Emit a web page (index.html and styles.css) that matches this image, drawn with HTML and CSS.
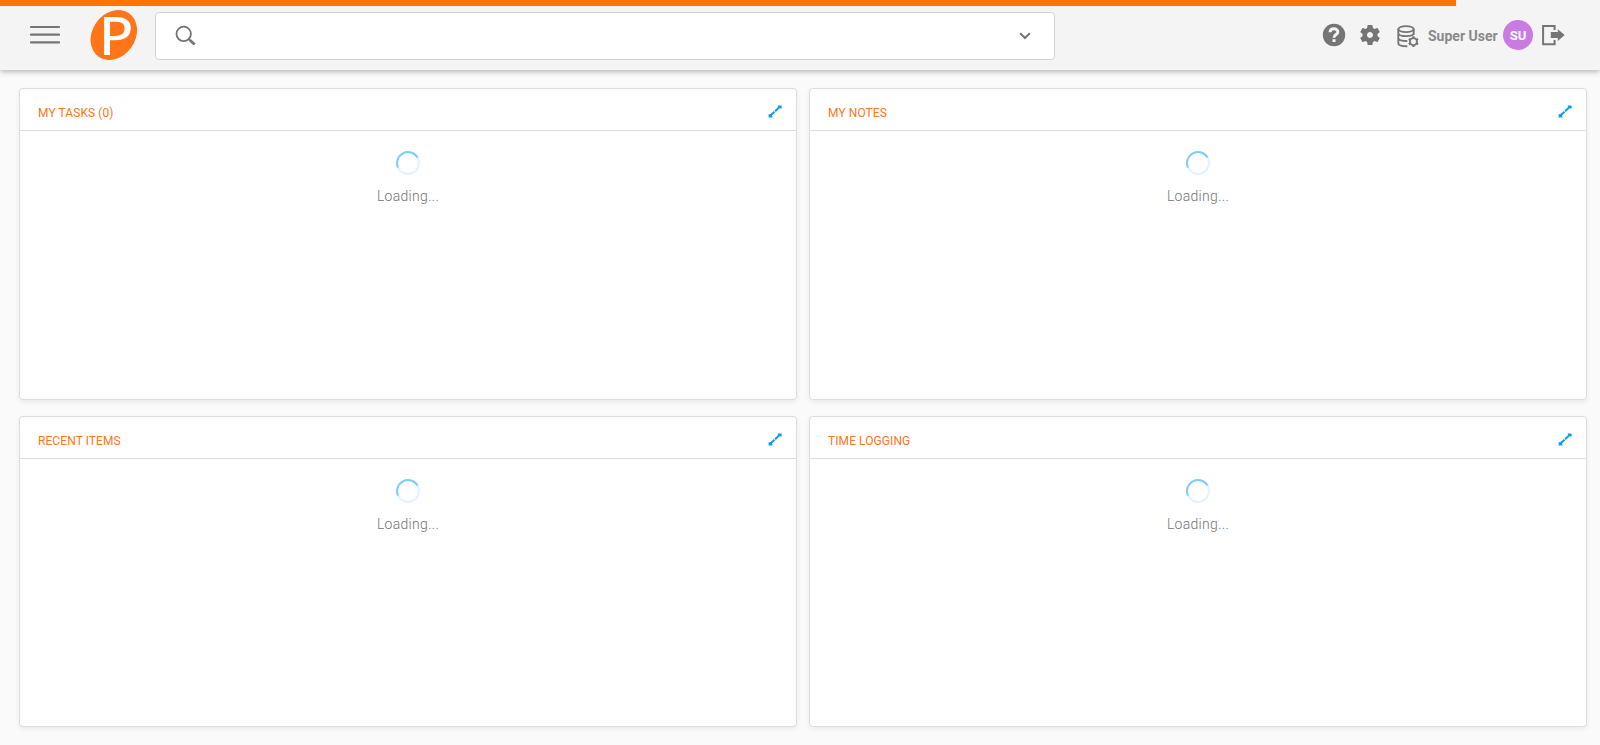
FILE: index.html
```html
<!DOCTYPE html>
<html lang="en">
<head>
<meta charset="utf-8">
<title>Dashboard</title>
<link rel="stylesheet" href="styles.css">
</head>
<body>
<header class="topbar">
  <div class="progress"></div>
  <svg class="menu" width="30" height="20" viewBox="0 0 30 20"><path d="M1 2h28M1 9.7h28M1 17.4h28" stroke="#757575" stroke-width="2.2" stroke-linecap="round"/></svg>
  <svg class="logo" width="48" height="52" viewBox="0 0 48 52"><ellipse cx="23.800" cy="26" rx="21.500" ry="26.500" transform="rotate(35 23.800 26)" fill="#ff7518"/><path fill="#fff" fill-rule="evenodd" d="M14.100 8H26C36 8 40.800 12 40.800 19C40.800 27 35 31.300 25 31.300H20V46H14.100ZM20 12.700V27H25C31.500 27 34.600 24.300 34.600 19.300C34.600 14.600 31.500 12.700 25 12.700Z"/></svg>
  <div class="search">
    <svg width="22" height="22" viewBox="0 0 22 22" fill="none" stroke="#757575"><circle cx="8.700" cy="8.900" r="7.200" stroke-width="1.800"/><path d="M13.800 14l1.500 1.500" stroke-width="1.800"/><path d="M15 15.200l4.700 4.400" stroke-width="2.800"/></svg>
    <svg class="chevron" width="12" height="8" viewBox="0 0 12 8"><path d="M1.200 1.200L6 6l4.800-4.800" fill="none" stroke="#757575" stroke-width="2"/></svg>
  </div>
  <nav class="tools">
    <svg class="help" width="24" height="24" viewBox="0 0 24 24"><circle cx="12" cy="12" r="11.200" fill="#757575"/><path d="M8 9.300C8.200 4.700 15.800 4.700 15.800 9C15.800 11.600 12 11.600 12 14.800" fill="none" stroke="#f4f4f4" stroke-width="3"/><path d="M10.500 16.200h3v2.800h-3z" fill="#f4f4f4"/></svg>
    <svg class="gear" width="24" height="24" viewBox="0 0 24 24"><path fill="#757575" d="M19.430 12.980c.04-.32.070-.64.070-.98s-.03-.66-.07-.98l2.110-1.650c.19-.15.240-.42.120-.64l-2-3.460c-.12-.22-.39-.3-.61-.22l-2.490 1c-.52-.4-1.080-.73-1.690-.98l-.38-2.650C14.460 2.180 14.250 2 14 2h-4c-.25 0-.46.180-.49.420l-.38 2.650c-.61.250-1.170.590-1.690.980l-2.490-1c-.23-.09-.49 0-.61.220l-2 3.460c-.13.220-.07.490.120.640l2.110 1.650c-.04.320-.07.650-.07.980s.03.660.070.980l-2.110 1.650c-.19.150-.24.420-.12.640l2 3.460c.12.220.390.300.610.220l2.490-1c.52.400 1.080.730 1.690.980l.38 2.650c.03.240.240.420.490.420h4c.25 0 .46-.18.490-.42l.38-2.650c.61-.25 1.170-.59 1.690-.98l2.490 1c.23.090.49 0 .61-.22l2-3.460c.12-.22.070-.49-.12-.64l-2.110-1.650zM12 15c-1.650 0-3-1.350-3-3s1.350-3 3-3 3 1.350 3 3-1.350 3-3 3z"/></svg>
    <svg class="data" width="22" height="23" viewBox="0 0 22 23" fill="none" stroke="#757575"><ellipse cx="9" cy="4.100" rx="7.700" ry="3" stroke-width="1.800"/><path d="M1.300 4v14.200c0 1.900 3.800 3 9 3.100M16.700 4v5.700M1.300 8c0 4.200 15.400 4.200 15.400 0M1.300 13c0 2.100 3.600 3 9 3" stroke-width="1.900"/><circle cx="16.400" cy="16.600" r="3.500" stroke-width="1.900"/><path d="M16.400 11.200v2M16.400 20v2M11.800 13.900l1.700 1M19.300 18.300l1.700 1M11.800 19.300l1.700-1M19.300 14.900l1.700-1" stroke-width="2.200"/></svg>
    <span class="user">Super User</span>
    <span class="avatar">SU</span>
    <svg class="exit" width="24" height="22" viewBox="0 0 24 22"><path d="M13.600 6V1.900H2.100v18.300h11.500V16" fill="none" stroke="#757575" stroke-width="2"/><path d="M9.800 8h7V5.200L23.700 11l-6.900 5.900V14h-7z" fill="#757575"/></svg>
  </nav>
</header>
<main class="grid">
  <section class="card"><div class="head"><h2>MY TASKS (0)</h2><svg class="expand" width="14" height="13" viewBox="0 0 14 13"><path d="M2.500 10.500L11.500 2" stroke="#0d9bea" stroke-width="2" stroke-dasharray="5.500 .8"/><path d="M.6 9.300h2L4.400 11v1.600H.6zM9.900.4h3.700v3.200h-2L9.900 2z" fill="#0d9bea"/></svg></div><div class="body"><svg class="spinner" width="24" height="24" viewBox="0 0 24 24"><circle cx="12" cy="12" r="11" fill="none" stroke="#e1f3fe" stroke-width="2"/><path d="M2 16.600A11 11 0 0 1 21.500 6.500" fill="none" stroke="#81cdfa" stroke-width="2"/></svg><p>Loading...</p></div></section>
  <section class="card"><div class="head"><h2>MY NOTES</h2><svg class="expand" width="14" height="13" viewBox="0 0 14 13"><path d="M2.500 10.500L11.500 2" stroke="#0d9bea" stroke-width="2" stroke-dasharray="5.500 .8"/><path d="M.6 9.300h2L4.400 11v1.600H.6zM9.900.4h3.700v3.200h-2L9.900 2z" fill="#0d9bea"/></svg></div><div class="body"><svg class="spinner" width="24" height="24" viewBox="0 0 24 24"><circle cx="12" cy="12" r="11" fill="none" stroke="#e1f3fe" stroke-width="2"/><path d="M2 16.600A11 11 0 0 1 21.500 6.500" fill="none" stroke="#81cdfa" stroke-width="2"/></svg><p>Loading...</p></div></section>
  <section class="card"><div class="head"><h2>RECENT ITEMS</h2><svg class="expand" width="14" height="13" viewBox="0 0 14 13"><path d="M2.500 10.500L11.500 2" stroke="#0d9bea" stroke-width="2" stroke-dasharray="5.500 .8"/><path d="M.6 9.300h2L4.400 11v1.600H.6zM9.900.4h3.700v3.200h-2L9.900 2z" fill="#0d9bea"/></svg></div><div class="body"><svg class="spinner" width="24" height="24" viewBox="0 0 24 24"><circle cx="12" cy="12" r="11" fill="none" stroke="#e1f3fe" stroke-width="2"/><path d="M2 16.600A11 11 0 0 1 21.500 6.500" fill="none" stroke="#81cdfa" stroke-width="2"/></svg><p>Loading...</p></div></section>
  <section class="card"><div class="head"><h2>TIME LOGGING</h2><svg class="expand" width="14" height="13" viewBox="0 0 14 13"><path d="M2.500 10.500L11.500 2" stroke="#0d9bea" stroke-width="2" stroke-dasharray="5.500 .8"/><path d="M.6 9.300h2L4.400 11v1.600H.6zM9.900.4h3.700v3.200h-2L9.900 2z" fill="#0d9bea"/></svg></div><div class="body"><svg class="spinner" width="24" height="24" viewBox="0 0 24 24"><circle cx="12" cy="12" r="11" fill="none" stroke="#e1f3fe" stroke-width="2"/><path d="M2 16.600A11 11 0 0 1 21.500 6.500" fill="none" stroke="#81cdfa" stroke-width="2"/></svg><p>Loading...</p></div></section>
</main>
</body>
</html>
```
FILE: styles.css
```css
* { box-sizing: border-box; }
body { margin: 0; height: 745px; overflow: hidden; background: #fafafa; font-family: Roboto, sans-serif; color: #8a8a8a; }
svg { display: block; flex: none; }
.topbar { position: relative; display: flex; align-items: flex-start; height: 70px; padding-left: 30px; background: #f4f4f4; box-shadow: 0 2px 5px rgba(0, 0, 0, .26); }
.progress { position: absolute; top: 0; left: 0; width: 1456px; height: 6px; background: #ff7300; }
.menu { margin-top: 25px; }
.logo { margin: 9px 0 0 30px; }
.search { display: flex; align-items: center; justify-content: space-between; width: 900px; height: 48px; margin: 12px 0 0 17px; padding: 0 23px 0 19px; background: #fff; border: 1px solid #d3d3d3; border-radius: 4px; }
.tools { display: flex; align-items: center; height: 58px; margin: 6px 0 0 267px; }
.gear { margin-left: 12px; }
.data { margin: 2px 0 0 15px; }
.help { margin-top: -1px; }
.user { margin: 2px 0 0 9px; width: 75px; white-space: nowrap; font-size: 14px; font-weight: 700; }
.avatar { display: flex; align-items: center; justify-content: center; width: 30px; height: 30px; border-radius: 50%; background: #c97be3; color: #fff; font-size: 13px; font-weight: 700; }
.exit { margin-left: 8px; }
.grid { display: grid; grid-template-columns: 778px 778px; grid-template-rows: 312px 311px; gap: 16px 12px; padding: 18px 0 0 19px; }
.card { background: #fff; border: 1px solid #dedede; border-radius: 4px; box-shadow: 0 2px 5px rgba(0, 0, 0, .07); }
.head { display: flex; align-items: center; justify-content: space-between; height: 42px; padding: 4px 14px 0 18px; border-bottom: 1px solid #dedede; }
.head h2 { margin: 2px 0 0; font-size: 12px; line-height: 16px; font-weight: 400; letter-spacing: .08px; color: #ff7518; }
.body { display: flex; flex-direction: column; align-items: center; padding-top: 20px; }
.body p { margin: 12px 0 0; font-size: 14px; line-height: 18px; font-weight: 300; letter-spacing: .3px; color: #757575; }
```
